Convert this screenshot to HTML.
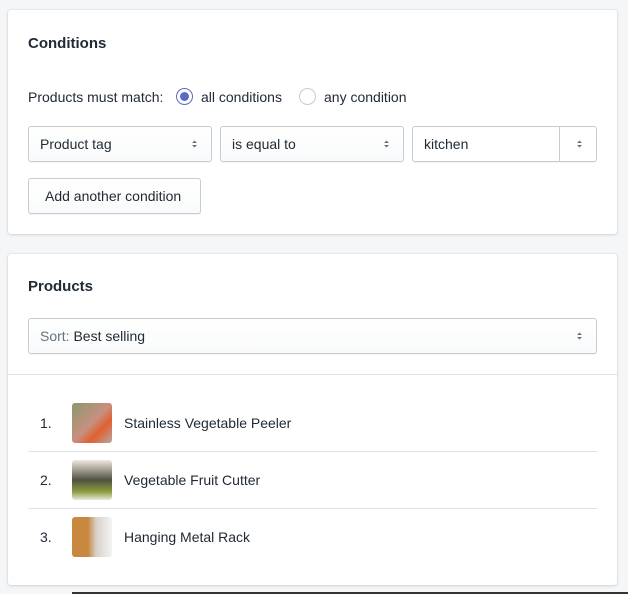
<!DOCTYPE html>
<html><head><style>
*{box-sizing:border-box;margin:0;padding:0}
body{width:628px;height:594px;background:#f4f6f8;font-family:"Liberation Sans",sans-serif;color:#212b36;font-size:14px;position:relative;overflow:hidden}
.card{position:absolute;left:8px;width:609px;background:#fff;border-radius:3px;box-shadow:0 0 0 1px rgba(63,63,68,.05),0 1px 3px 0 rgba(63,63,68,.15)}
.abs{position:absolute}
h2{position:absolute;font-size:15px;font-weight:bold;color:#212b36}
.sel{position:absolute;height:36px;border:1px solid #c4cdd5;border-radius:3px;background:linear-gradient(#fff,#f9fafb);box-shadow:0 1px 0 rgba(22,29,37,.05);padding-left:11px;line-height:34px}
.arr{position:absolute;right:13px;top:12px;width:7px;height:10px}
.radio{position:absolute;width:17px;height:17px;border:1px solid #c4cdd5;border-radius:50%;background:#fff}
.row{position:absolute;left:20px;width:569px;height:57px;border-top:1px solid #dfe3e8}
.num{position:absolute;left:12px;top:20px}
.th{position:absolute;left:44px;top:8px;width:40px;height:40px;border-radius:3px}
.nm{position:absolute;left:96px;top:20px}
</style></head><body>
<svg width="0" height="0" style="position:absolute"><defs><symbol id="a" viewBox="0 0 7 10"><path d="M1 4L3.5 1.5 6 4z M1 6L3.5 8.5 6 6z" fill="#637381"/></symbol></defs></svg>
<div class="card" style="top:10px;height:224px">
<h2 style="left:20px;top:25px">Conditions</h2>
<div class="abs" style="left:20px;top:79px">Products must match:</div>
<div class="radio" style="left:168px;top:78px;border-color:#5c6ac4"><div style="position:absolute;left:3px;top:3px;width:9px;height:9px;border-radius:50%;background:#5c6ac4"></div></div>
<div class="abs" style="left:193px;top:79px">all conditions</div>
<div class="radio" style="left:291px;top:78px"></div>
<div class="abs" style="left:316px;top:79px">any condition</div>
<div class="sel" style="left:20px;top:116px;width:184px">Product tag<svg class="arr"><use href="#a"/></svg></div>
<div class="sel" style="left:212px;top:116px;width:184px">is equal to<svg class="arr"><use href="#a"/></svg></div>
<div class="sel" style="left:404px;top:116px;width:185px;background:#fff">kitchen<div class="abs" style="left:146px;top:0;width:1px;height:34px;background:#c4cdd5"></div><svg class="arr"><use href="#a"/></svg></div>
<div class="sel" style="left:20px;top:168px;width:173px;padding-left:16px">Add another condition</div>
</div>
<div class="card" style="top:254px;height:331px">
<h2 style="left:20px;top:24px">Products</h2>
<div class="sel" style="left:20px;top:64px;width:569px"><span style="color:#637381">Sort:</span> Best selling<svg class="arr"><use href="#a"/></svg></div>
<div class="abs" style="left:0;top:120px;width:609px;height:1px;background:#dfe3e8"></div>
<div class="row" style="top:141px;border-top:none"><span class="num">1.</span><div class="th" style="background:linear-gradient(135deg,#8a9a6a,#c89080 50%,#e06030 70%,#b8a8a0)"></div><span class="nm">Stainless Vegetable Peeler</span></div>
<div class="row" style="top:197px"><span class="num">2.</span><div class="th" style="background:linear-gradient(180deg,#f0e8e0,#505040 50%,#90a040 80%,#e8e8e0)"></div><span class="nm">Vegetable Fruit Cutter</span></div>
<div class="row" style="top:254px"><span class="num">3.</span><div class="th" style="background:linear-gradient(90deg,#c88840 40%,#d8d0c8 60%,#f4f4f4)"></div><span class="nm">Hanging Metal Rack</span></div>
</div>
<div class="abs" style="left:72px;top:592px;width:556px;height:2px;background:#333"></div>
</body></html>
